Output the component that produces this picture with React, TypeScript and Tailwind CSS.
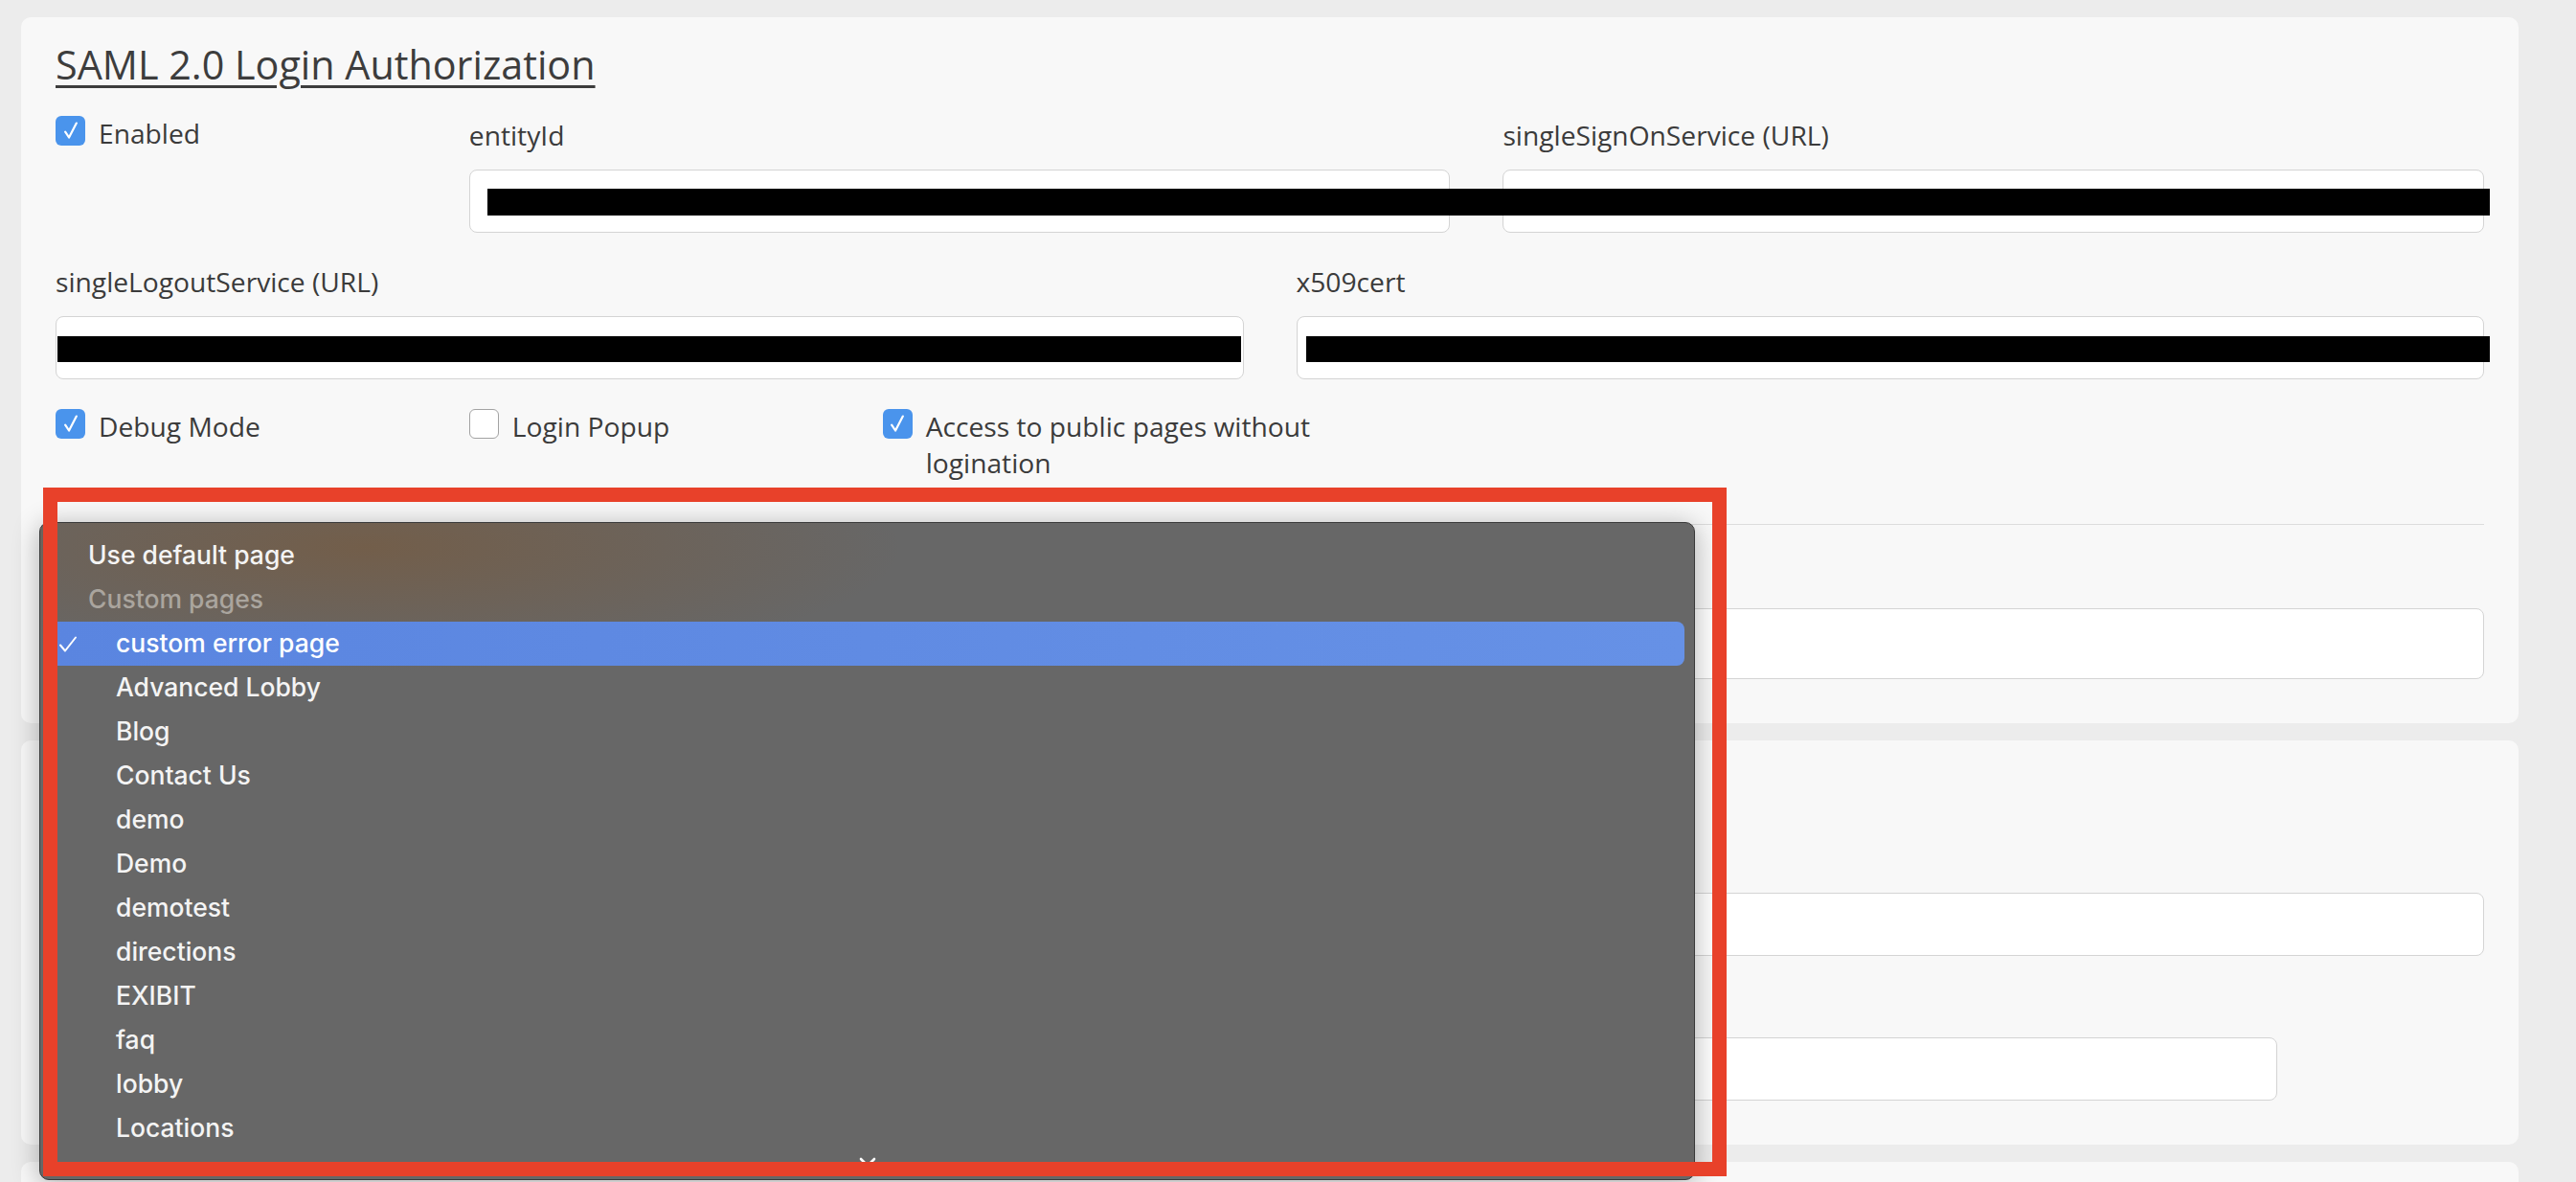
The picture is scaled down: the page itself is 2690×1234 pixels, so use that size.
import React from 'react';

const pages = ['Advanced Lobby', 'Blog', 'Contact Us', 'demo', 'Demo', 'demotest', 'directions', 'EXIBIT', 'faq', 'lobby', 'Locations'];

const Checkbox = ({ checked }: { checked: boolean }) =>
  checked ? (
    <span className="mt-[1px] flex h-[31px] w-[31px] shrink-0 items-center justify-center rounded-[6px] bg-[#4a94ec]">
      <svg viewBox="0 0 20 20" className="h-[26px] w-[26px]" fill="none" stroke="white" strokeWidth="1.7" strokeLinecap="round" strokeLinejoin="round">
        <path d="M5.5 10.5l3 4.5L14.5 3.5" />
      </svg>
    </span>
  ) : (
    <span className="mt-[1px] h-[31px] w-[31px] shrink-0 rounded-[6px] border border-[#a3a3a3] bg-white" />
  );

const CheckField = ({ checked, label, className = '' }: { checked: boolean; label: string; className?: string }) => (
  <label className={`flex items-start gap-[14px] ${className}`}>
    <Checkbox checked={checked} />
    <span className="max-w-[420px] leading-[38px]">{label}</span>
  </label>
);

const Field = ({ label, className = '', tall = false }: { label?: string; className?: string; tall?: boolean }) => (
  <div className={className}>
    <div className="h-[42px] leading-[42px]">{label}</div>
    <div className={`mt-[15px] rounded-[8px] border border-[#d4d4d4] bg-white ${tall ? 'h-[74px]' : 'h-[66px]'}`} />
  </div>
);

const Panel = ({ children }: { children?: React.ReactNode }) => (
  <section className="rounded-[10px] bg-[#f8f8f8] px-[36px] pt-[24px] pb-[46px]">{children}</section>
);

export default function App() {
  return (
    <div className="relative h-screen w-full overflow-hidden bg-[#ececec] pl-[22px] pr-[60px] pt-[18px] font-['Open_Sans',sans-serif] text-[28.2px] text-[#3b3b3b]">
      <div className="flex flex-col gap-[18px]">
        <Panel>
          <h2 className="text-[41.3px] leading-[50px] text-[#3d3d3d] underline decoration-[2.5px] underline-offset-[6px]">
            SAML 2.0 Login Authorization
          </h2>
          <div className="mt-[28px] grid grid-cols-12 gap-x-[55px] gap-y-[30px]">
            <CheckField checked label="Enabled" className="col-span-2" />
            <Field label="entityId" className="col-span-5" />
            <Field label="singleSignOnService (URL)" className="col-span-5" />
            <Field label="singleLogoutService (URL)" className="col-span-6" />
            <Field label="x509cert" className="col-span-6" />
            <CheckField checked label="Debug Mode" className="col-span-2" />
            <CheckField checked={false} label="Login Popup" className="col-span-2" />
            <CheckField checked label="Access to public pages without logination" className="col-span-3" />
          </div>
          <div className="mt-[45px] h-px bg-[#dcdcdc]" />
          {/* select sits under the open popup */}
          <Field tall className="mt-[30px]" />
        </Panel>

        <Panel>
          <div className="h-[50px]" />
          <div className="mt-[28px] grid grid-cols-12 gap-x-[55px] gap-y-[28px]">
            <Field className="col-span-12" />
            <Field className="col-span-11" />
          </div>
        </Panel>

        <section className="h-[300px] rounded-[10px] bg-[#f8f8f8]" />
      </div>

      {/* redacted values */}
      <div className="absolute left-[509px] top-[197px] h-[28px] w-[2091px] bg-black" />
      <div className="absolute left-[60px] top-[351px] h-[27px] w-[1236px] bg-black" />
      <div className="absolute left-[1364px] top-[351px] h-[27px] w-[1236px] bg-black" />

      {/* native select popup */}
      <div className="absolute left-[41px] top-[545px] h-[687px] w-[1729px] overflow-hidden rounded-[10px] border border-[#3a3a3a] bg-[#676767] font-['Inter',sans-serif] text-[26.5px] font-medium text-[#f4f4f4] shadow-[0_4px_28px_rgba(0,0,0,0.3)]">
        <div className="absolute inset-0 bg-[radial-gradient(ellipse_560px_130px_at_340px_25px,rgba(122,88,55,0.6),transparent)]" />
        <div className="relative pt-[11px]">
          <div className="h-[46px] pl-[50px] leading-[46px]"><span className="relative top-[-1px]">Use default page</span></div>
          <div className="h-[46px] pl-[50px] leading-[46px] text-[#aaa59e]"><span className="relative top-[-1px]">Custom pages</span></div>
          <div className="relative mx-[10px] h-[46px] rounded-[8px] bg-[linear-gradient(90deg,#5a85e0,#6691e6)] pl-[69px] leading-[46px] text-white">
            <svg viewBox="0 0 20 17" className="absolute left-[9px] top-[15px] h-[17px] w-[20px]" fill="none" stroke="white" strokeWidth="2" strokeLinecap="round" strokeLinejoin="round">
              <path d="M2 9.5l5 6L18 1.5" />
            </svg>
            <span className="relative top-[-1px]">custom error page</span>
          </div>
          {pages.map((p) => (
            <div key={p} className="h-[46px] pl-[79px] leading-[46px]"><span className="relative top-[-1px]">{p}</span></div>
          ))}
        </div>
        <svg viewBox="0 0 20 12" className="absolute left-[854px] top-[662px] h-[12px] w-[20px]" fill="none" stroke="white" strokeWidth="2.6" strokeLinecap="round" strokeLinejoin="round">
          <path d="M3 2l7 7 7-7" />
        </svg>
      </div>

      {/* annotation frame */}
      <div className="absolute left-[45px] top-[509px] h-[719px] w-[1758px] border-[15px] border-[#e8412a]" />
    </div>
  );
}
